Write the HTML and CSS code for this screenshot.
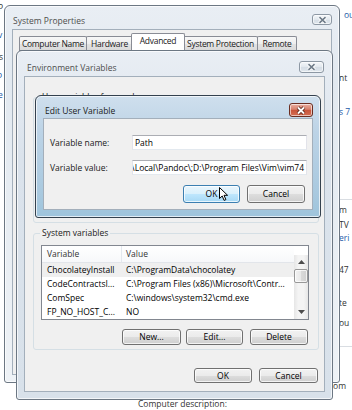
FILE: index.html
```html
<!DOCTYPE html>
<html lang="en">
<head>
  <meta charset="UTF-8" />
  <meta name="viewport" content="width=device-width, initial-scale=1.0" />
  <title>Environment Variables</title>
  <link rel="stylesheet" href="styles.css">
</head>
<body>
  <div class="desk">

    <!-- Control Panel page peeking out behind the dialogs -->
    <div class="page">
      <span class="frag fl1">P</span>
      <span class="frag fl2 link">v</span>
      <span class="frag fl3">s</span>
      <span class="frag fl4 link">P</span>
      <span class="frag fl5 link">e</span>
      <span class="frag fr1 link">ou</span>
      <span class="frag fr2">nt</span>
      <span class="frag fr3 link">s 7</span>
      <div class="rule r1"></div>
      <span class="frag fr4">m</span>
      <span class="frag fr5">TV</span>
      <span class="frag fr6 link">eri</span>
      <span class="frag fr7">47</span>
      <span class="frag fr8">te</span>
      <span class="frag fr9">ou</span>
      <div class="rule r2"></div>
      <span class="frag fr10">com</span>
      <span class="frag fb1">Computer description:</span>
    </div>

    <!-- System Properties -->
    <div class="win sysprops">
      <div class="titlebar">
        <span class="title">System Properties</span>
        <span class="close">
          <svg width="9" height="8" viewBox="0 0 9 8"><path d="M1.5 1.2 L7.5 6.8 M7.5 1.2 L1.5 6.8" stroke="#fff" stroke-width="3.4"/><path d="M1.5 1.2 L7.5 6.8 M7.5 1.2 L1.5 6.8" stroke="#6f7c89" stroke-width="1.6"/></svg>
        </span>
      </div>
      <div class="client">
        <div class="tabs">
          <div class="tab t-name">Computer Name</div>
          <div class="tab t-hw">Hardware</div>
          <div class="tab t-adv selected">Advanced</div>
          <div class="tab t-prot">System Protection</div>
          <div class="tab t-rem">Remote</div>
        </div>
        <div class="tabpanel"></div>
      </div>
    </div>

    <!-- Environment Variables -->
    <div class="win envvars">
      <div class="titlebar">
        <span class="title">Environment Variables</span>
        <span class="close">
          <svg width="9" height="8" viewBox="0 0 9 8"><path d="M1.5 1.2 L7.5 6.8 M7.5 1.2 L1.5 6.8" stroke="#fff" stroke-width="3.4"/><path d="M1.5 1.2 L7.5 6.8 M7.5 1.2 L1.5 6.8" stroke="#6f7c89" stroke-width="1.6"/></svg>
        </span>
      </div>
      <div class="client env-client">
        <div class="group user-group">
          <div class="group-label">User variables for pandoc</div>
        </div>

        <div class="group sys-group">
          <div class="group-label">System variables</div>
          <div class="listview">
            <div class="lv-main">
              <div class="lv-head">
                <div class="col-var">Variable</div>
                <div class="col-val">Value</div>
              </div>
              <div class="lv-row selected">
                <div class="col-var">ChocolateyInstall</div>
                <div class="col-val">C:\ProgramData\chocolatey</div>
              </div>
              <div class="lv-row">
                <div class="col-var">CodeContractsI...</div>
                <div class="col-val">C:\Program Files (x86)\Microsoft\Contr...</div>
              </div>
              <div class="lv-row">
                <div class="col-var">ComSpec</div>
                <div class="col-val">C:\windows\system32\cmd.exe</div>
              </div>
              <div class="lv-row">
                <div class="col-var">FP_NO_HOST_C...</div>
                <div class="col-val">NO</div>
              </div>
            </div>
            <div class="scrollbar">
              <div class="sb-btn">
                <svg width="7" height="4" viewBox="0 0 7 4"><path d="M0 4 L3.5 0 L7 4 Z" fill="#4d4d4d"/></svg>
              </div>
              <div class="sb-track">
                <div class="sb-thumb"></div>
              </div>
              <div class="sb-btn">
                <svg width="7" height="4" viewBox="0 0 7 4"><path d="M0 0 L3.5 4 L7 0 Z" fill="#4d4d4d"/></svg>
              </div>
            </div>
          </div>
          <div class="btn-row group-buttons">
            <div class="btn w59">New...</div>
            <div class="btn w57">Edit...</div>
            <div class="btn w58">Delete</div>
          </div>
        </div>

        <div class="btn-row dialog-buttons">
          <div class="btn w58">OK</div>
          <div class="btn w59">Cancel</div>
        </div>
      </div>
    </div>

    <!-- Edit User Variable (active) -->
    <div class="win editvar active">
      <div class="titlebar">
        <span class="title">Edit User Variable</span>
        <span class="close red">
          <svg width="10" height="9" viewBox="0 0 10 9"><path d="M2 1.5 L8 7.5 M8 1.5 L2 7.5" stroke="#5a2418" stroke-width="3.6"/><path d="M2 1.5 L8 7.5 M8 1.5 L2 7.5" stroke="#fff" stroke-width="1.8"/></svg>
        </span>
      </div>
      <div class="client edit-client">
        <div class="fields">
          <label class="field-label">Variable name:</label>
          <div class="textbox">Path</div>
          <label class="field-label">Variable value:</label>
          <div class="textbox scrolled"><span>n\Local\Pandoc\;D:\Program Files\Vim\vim74</span></div>
        </div>
        <div class="btn-row edit-buttons">
          <div class="btn hot w57">OK</div>
          <div class="btn w58">Cancel</div>
        </div>
      </div>
    </div>

    <!-- mouse pointer over the OK button -->
    <svg class="pointer" width="10" height="15" viewBox="0 0 10 15">
      <path d="M0.5 0.5 L0.5 11.5 L3.2 9 L5.1 13.4 L6.9 12.6 L5 8.3 L8.6 8.3 Z" fill="#fff" stroke="#000" stroke-width="1" stroke-linejoin="round"/>
    </svg>
  </div>
</body>
</html>
```

FILE: styles.css
```css
html, body {
  margin: 0;
  padding: 0;
}

body {
  width: 352px;
  height: 410px;
  overflow: hidden;
  background: #fff;
  font-family: "Open Sans", "Noto Sans", sans-serif;
  font-size: 8.5px;
  line-height: 12px;
  color: #000;
}

.desk {
  position: relative;
  width: 352px;
  height: 410px;
  overflow: hidden;
}

/* ---- page behind ---- */
.frag {
  position: absolute;
  white-space: nowrap;
  color: #333;
}

.frag.link { color: #1e5aa8; }

.fl1 { left: -2px; top: 2px; }
.fl2 { left: -2px; top: 29px; }
.fl3 { left: -1px; top: 51px; }
.fl4 { left: -3px; top: 71px; }
.fl5 { left: -2px; top: 89px; }

.fr1 { left: 344px; top: 9px; }
.fr2 { left: 339px; top: 72px; }
.fr3 { left: 339px; top: 106px; }
.fr4 { left: 339px; top: 204px; }
.fr5 { left: 339px; top: 219px; }
.fr6 { left: 339px; top: 232px; }
.fr7 { left: 339px; top: 264px; }
.fr8 { left: 339px; top: 297px; }
.fr9 { left: 339px; top: 317px; }
.fr10 { left: 329px; top: 380px; }
.fb1 { left: 138px; top: 398px; }

.rule {
  position: absolute;
  left: 333px;
  width: 19px;
  height: 1px;
  background: #d9dde2;
}

.r1 { top: 199px; }
.r2 { top: 346px; }

/* ---- windows ---- */
.win {
  position: absolute;
  box-sizing: border-box;
  display: flex;
  flex-direction: column;
  border: 1px solid #6c7783;
  border-radius: 6px 6px 3px 3px;
  padding: 0 7px 7px;
  background: linear-gradient(#e9eef4, #dbe3ec 30%, #d8e1ea);
  box-shadow: inset 0 0 0 1px rgba(255, 255, 255, 0.7);
}

.win.active {
  border-color: #34414e;
  background: linear-gradient(#cfdfed, #bcd3e6 30%, #a9c9df 80%, #9ec4dc);
}

.sysprops {
  left: 4px;
  top: 5px;
  width: 336px;
  height: 378px;
  background: linear-gradient(#e9eef4, #e2e9f0 20%, #eef2f6);
}

.envvars { left: 16px; top: 50px; width: 317px; height: 350px; }
.editvar { left: 35px; top: 95px; width: 286px; height: 123px; }

.titlebar {
  flex: none;
  display: flex;
  align-items: flex-start;
  justify-content: space-between;
}

.title {
  color: #4d4d4d;
  white-space: nowrap;
}

.active .title { color: #1b1b1b; }

.close {
  box-sizing: border-box;
  display: flex;
  align-items: center;
  justify-content: center;
  border: 1px solid #8d98a4;
  border-radius: 3px;
  background: linear-gradient(#f4f7fa, #e2e8ee 50%, #d5dde5 51%, #dfe6ed);
  box-shadow: inset 0 0 0 1px rgba(255, 255, 255, 0.6);
}

.close.red {
  border-color: #6b2d20;
  background: linear-gradient(#eab0a2, #d7806b 45%, #c8533a 50%, #d46e52);
}

.sysprops .titlebar { height: 23px; }
.sysprops .title { margin: 9px 0 0 1px; }
.sysprops .close { width: 20px; height: 11px; margin-top: 8px; }

.envvars .titlebar { height: 25px; }
.envvars .title { margin: 11px 0 0 3px; }
.envvars .close { width: 25px; height: 12px; margin: 10px 1px 0 0; }

.editvar .titlebar { height: 22px; }
.editvar .title { margin: 9px 0 0 2px; }
.editvar .close { width: 24px; height: 14px; margin-top: 7px; }

.client {
  flex: 1;
  display: flex;
  flex-direction: column;
  background: #f0f0f0;
  border: 1px solid #a3afbb;
}

/* ---- system properties tabs ---- */
.tabs {
  display: flex;
  align-items: flex-end;
  padding: 3px 0 0 6px;
}

.tab {
  box-sizing: border-box;
  height: 14px;
  margin-left: -1px;
  border: 1px solid #898c95;
  border-bottom: none;
  border-radius: 2px 2px 0 0;
  background: linear-gradient(#f8f8f8, #eeeeee 50%, #e3e3e3 51%, #dadada);
  text-align: center;
  line-height: 13px;
  letter-spacing: -0.3px;
  color: #1a1a1a;
  white-space: nowrap;
  overflow: hidden;
}

.tab.selected {
  position: relative;
  height: 17px;
  margin: 0 -1px 0 -2px;
  background: #fff;
  line-height: 14px;
  z-index: 1;
}

.t-name { width: 68px; margin-left: 0; }
.t-hw { width: 47px; }
.t-adv { width: 54px; }
.t-prot { width: 75px; }
.t-rem { width: 40px; }

.tabpanel {
  flex: 1;
  margin: 0 6px 6px;
  background: #fff;
  border: 1px solid #898c95;
}

/* ---- environment variables ---- */
.env-client {
  padding: 20px 5px 0 8px;
}

.group {
  box-sizing: border-box;
  border: 1px solid #d5dfe5;
  border-radius: 3px;
}

.group-label {
  width: max-content;
  margin: -7px 0 0 -1px;
  padding: 0 2px;
  background: #f0f0f0;
  color: #1a1a1a;
}

.user-group {
  height: 126px;
  padding-left: 7px;
}

.sys-group {
  margin-top: 10px;
  padding: 0 9px 4px 7px;
}

.listview {
  display: flex;
  height: 75px;
  box-sizing: border-box;
  margin-top: 6px;
  border: 1px solid #828790;
  background: #fff;
}

.lv-main {
  flex: 1;
  min-width: 0;
}

.lv-head {
  display: flex;
  height: 17px;
  box-sizing: border-box;
  border-bottom: 1px solid #e2e5ea;
  background: linear-gradient(#fff, #f7f8fa);
  color: #333;
  line-height: 16px;
}

.lv-head .col-var {
  border-right: 1px solid #e3e8ee;
}

.lv-row {
  display: flex;
  height: 14px;
  line-height: 14px;
}

.lv-row.selected {
  background: #efefef;
}

.col-var {
  box-sizing: border-box;
  width: 80px;
  padding-left: 5px;
  white-space: nowrap;
  overflow: hidden;
}

.col-val {
  flex: 1;
  padding-left: 4px;
  white-space: nowrap;
  overflow: hidden;
}

.scrollbar {
  display: flex;
  flex-direction: column;
  width: 14px;
  margin-top: 9px;
  background: linear-gradient(90deg, #e6e6e6, #f4f4f4 30%, #f4f4f4 70%, #e6e6e6);
}

.sb-btn {
  height: 14px;
  display: flex;
  align-items: center;
  justify-content: center;
}

.sb-track {
  flex: 1;
}

.sb-thumb {
  box-sizing: border-box;
  height: 14px;
  border: 1px solid #989898;
  border-radius: 2px;
  background: linear-gradient(90deg, #f3f3f3, #e8e8e8 50%, #d9d9d9 51%, #d0d0d0);
  box-shadow: inset 0 0 0 1px rgba(255, 255, 255, 0.7);
}

.btn-row {
  display: flex;
  justify-content: flex-end;
}

.group-buttons {
  margin: 9px 1px 0 0;
  gap: 5px;
}

.group-buttons .btn + .btn + .btn { margin-left: 2px; }

.dialog-buttons {
  margin: 18px 1px 0 0;
  gap: 7px;
}

.btn {
  box-sizing: border-box;
  height: 16px;
  display: flex;
  align-items: center;
  justify-content: center;
  border: 1px solid #707070;
  border-radius: 3px;
  background: linear-gradient(#f2f2f2, #ebebeb 50%, #dddddd 51%, #cfcfcf);
  box-shadow: inset 0 0 0 1px rgba(255, 255, 255, 0.75);
  color: #000;
}

.dialog-buttons .btn { height: 15px; }

.btn.hot {
  border-color: #3c7fb1;
  background: linear-gradient(#eaf6fd, #d9f0fc 50%, #bee6fd 51%, #a7d9f5);
}

.w57 { width: 57px; }
.w58 { width: 58px; }
.w59 { width: 59px; }

/* ---- edit user variable ---- */
.edit-client {
  padding: 16px 5px 0 6px;
}

.fields {
  display: grid;
  grid-template-columns: 82px minmax(0, 1fr);
  row-gap: 10px;
  align-items: center;
}

.field-label {
  color: #1a1a1a;
  white-space: nowrap;
}

.textbox {
  box-sizing: border-box;
  height: 15px;
  padding: 0 2px;
  border: 1px solid #e2e3ea;
  border-top-color: #abadb3;
  border-bottom-color: #e3e9ef;
  background: #fff;
  line-height: 13px;
  white-space: nowrap;
  overflow: hidden;
}

.textbox.scrolled {
  display: flex;
  justify-content: flex-end;
  padding-left: 0;
}

.edit-buttons {
  margin: 10px 2px 0 0;
  gap: 7px;
}

.edit-buttons .btn { height: 18px; }

.pointer {
  position: absolute;
  left: 219px;
  top: 187px;
}
```
